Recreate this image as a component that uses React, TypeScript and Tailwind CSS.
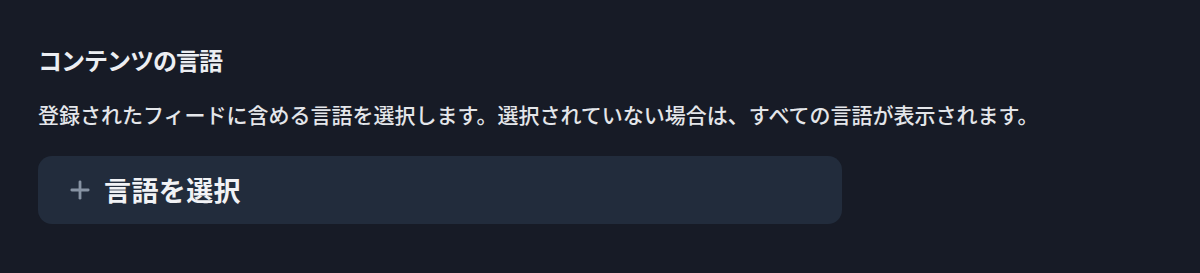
import { Plus } from 'lucide-react'

export default function App() {
  return (
    <div
      className="w-[1200px] h-[273px] bg-[#171b26] text-[#e8eaee] pl-[38px] pt-[44px]"
      style={{ fontFamily: '"Noto Sans CJK JP", "Noto Sans", sans-serif' }}
    >
      {/* セクション見出し */}
      <h2 className="text-[24px] leading-[32px] font-semibold tracking-[-1px] text-[#eceef2]">
        コンテンツの言語
      </h2>

      <p className="mt-[24px] text-[21px] leading-[28px] font-medium tracking-[0px] text-[#e4e6ea]">
        登録されたフィードに含める言語を選択します。選択されていない場合は、すべての言語が表示されます。
      </p>

      <button className="mt-[28px] w-[804px] h-[68px] rounded-[14px] bg-[#222c3c] flex items-center gap-[10px] pl-[28px] text-left">
        <Plus className="w-[28px] h-[28px] text-[#8793a3]" strokeWidth={2.4} />
        <span className="text-[27px] leading-[32px] font-bold tracking-[0.4px] text-[#f1f2f5]">
          言語を選択
        </span>
      </button>
    </div>
  )
}
